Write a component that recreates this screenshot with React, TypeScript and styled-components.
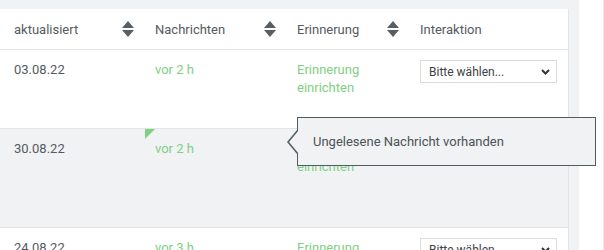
import * as React from 'react';
import styled, { createGlobalStyle } from 'styled-components';

const colors = {
  page: '#f1f2f4',
  line: '#e3e4e6',
  text: '#555b60',
  green: '#80cf84',
  tipBorder: '#4f5d62',
};

const GlobalStyle = createGlobalStyle`
  html, body {
    margin: 0;
    padding: 0;
    background: ${colors.page};
  }
  body {
    font-family: Roboto, "Noto Sans", Arial, sans-serif;
    font-size: 13px;
    color: ${colors.text};
  }
`;

const Page = styled.div`
  display: flex;
  width: 604px;
  height: 250px;
  overflow: hidden;
  background: ${colors.page};
`;

const Main = styled.div`
  flex: 0 0 579px;
  box-sizing: border-box;
  padding: 9px 10px 0 0;
`;

const Gutter = styled.div`
  flex: 1;
  background: white;
  border-right: 1px solid #e9eaec;
`;

const Table = styled.div`
  background: white;
  border-right: 1px solid ${colors.line};
  height: 100%;
`;

const Grid = styled.div<{ $height: number; $hover?: boolean }>`
  display: grid;
  grid-template-columns: 141px 142px 123px 1fr;
  height: ${({ $height }) => $height}px;
  border-bottom: 1px solid ${colors.line};
  background: ${({ $hover }) => ($hover ? colors.page : 'white')};
  position: relative;
`;

const HeadCell = styled.div`
  display: flex;
  align-items: center;
  justify-content: space-between;
  padding: 0 7px 0 14px;
  color: ${colors.text};
`;

const Cell = styled.div<{ $green?: boolean }>`
  position: relative;
  padding: 11px 14px 0 14px;
  line-height: 18px;
  color: ${({ $green }) => ($green ? colors.green : colors.text)};
`;

const SelectCell = styled.div`
  padding: 10px 11px 0 14px;
`;

const SelectBox = styled.div`
  display: flex;
  align-items: center;
  justify-content: space-between;
  box-sizing: border-box;
  width: 137px;
  height: 23px;
  padding: 0 6px 0 8px;
  border: 1px solid #dcdcdc;
  background: white;
  font-size: 12px;
  color: #3d4245;
`;

const Flag = styled.span`
  position: absolute;
  left: 4px;
  top: 0;
  width: 0;
  height: 0;
  border-top: 10px solid ${colors.green};
  border-right: 10px solid transparent;
`;

const Tooltip = styled.div`
  position: absolute;
  left: 297px;
  top: -12px;
  width: 299px;
  height: 49px;
  box-sizing: border-box;
  display: flex;
  align-items: center;
  padding-left: 15px;
  background: ${colors.page};
  border: 1px solid ${colors.tipBorder};
  color: #4a5357;
  z-index: 2;

  &::before,
  &::after {
    content: '';
    position: absolute;
    top: 50%;
    transform: translateY(-50%);
    border-top: 12px solid transparent;
    border-bottom: 12px solid transparent;
  }
  &::before {
    left: -11px;
    border-right: 10px solid ${colors.tipBorder};
  }
  &::after {
    left: -9px;
    border-right: 10px solid ${colors.page};
  }
`;

const SortIcon = () => (
  <svg width="12" height="16" viewBox="0 0 12 16">
    <path d="M6 0 L12 7 L0 7 Z" fill="#585e63" />
    <path d="M0 9 L12 9 L6 16 Z" fill="#585e63" />
  </svg>
);

const Chevron = () => (
  <svg width="9" height="6" viewBox="0 0 9 6">
    <path d="M1 1 L4.5 4.5 L8 1" stroke="#2f3437" strokeWidth="2" fill="none" />
  </svg>
);

const Select = () => (
  <SelectCell>
    <SelectBox>
      <span>Bitte wählen...</span>
      <Chevron />
    </SelectBox>
  </SelectCell>
);

type RowData = {
  date: string;
  ago: string;
  height: number;
  hover?: boolean;
  unread?: boolean;
};

const rows: RowData[] = [
  { date: '03.08.22', ago: 'vor 2 h', height: 78 },
  { date: '30.08.22', ago: 'vor 2 h', height: 98, hover: true, unread: true },
  { date: '24.08.22', ago: 'vor 3 h', height: 78 },
];

export default function App() {
  return (
    <Page>
      <GlobalStyle />
      <Main>
        <Table>
          <Grid $height={40}>
            <HeadCell>
              aktualisiert
              <SortIcon />
            </HeadCell>
            <HeadCell>
              Nachrichten
              <SortIcon />
            </HeadCell>
            <HeadCell>
              Erinnerung
              <SortIcon />
            </HeadCell>
            <HeadCell>Interaktion</HeadCell>
          </Grid>
          {rows.map((r) => (
            <Grid key={r.date} $height={r.height} $hover={r.hover}>
              <Cell>{r.date}</Cell>
              <Cell $green>
                {r.unread && <Flag />}
                {r.ago}
              </Cell>
              <Cell $green>
                Erinnerung
                <br />
                einrichten
              </Cell>
              <Select />
              {r.unread && <Tooltip>Ungelesene Nachricht vorhanden</Tooltip>}
            </Grid>
          ))}
        </Table>
      </Main>
      <Gutter />
    </Page>
  );
}
